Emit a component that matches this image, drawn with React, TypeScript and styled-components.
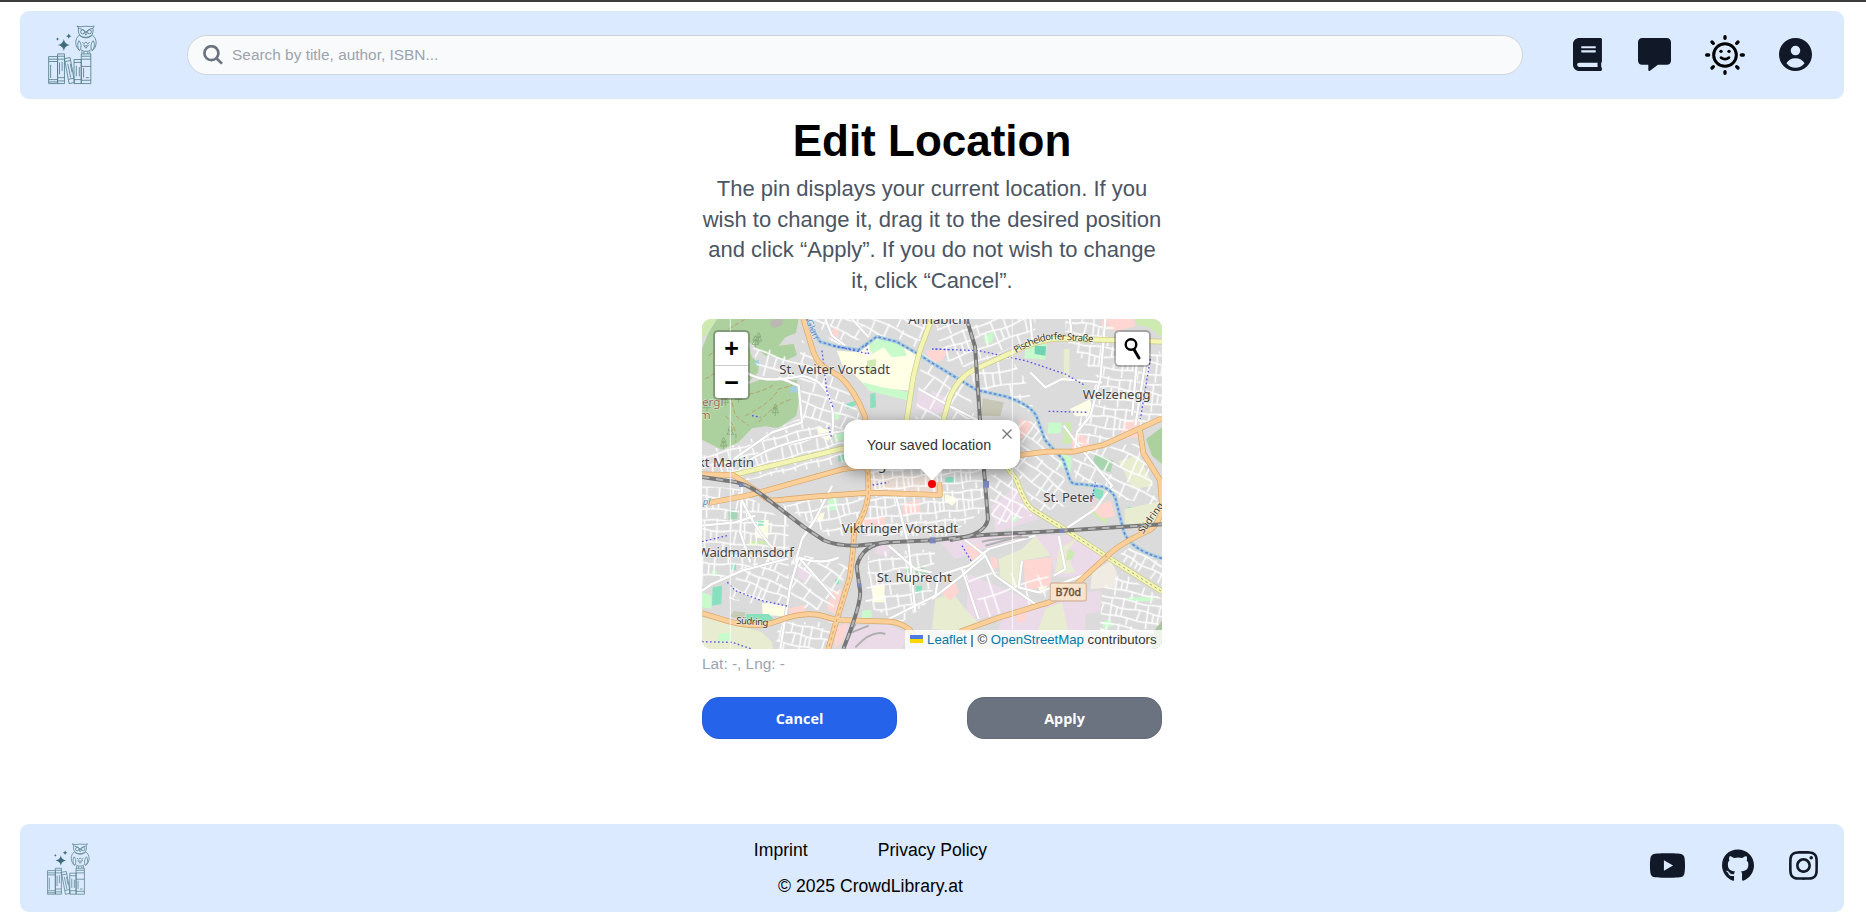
import React from "react";
import styled, { createGlobalStyle } from "styled-components";
import { FaBook, FaGithub, FaInstagram, FaYoutube } from "react-icons/fa";
import { FaMessage } from "react-icons/fa6";

const sans = `"Liberation Sans", Arial, sans-serif`;

const GlobalStyle = createGlobalStyle`
  *, *::before, *::after { box-sizing: border-box; }
  body { margin: 0; background: #fff; font-family: ${sans}; }
  h1, p { margin: 0; }
  a { color: inherit; text-decoration: none; }
  svg { display: block; }
`;

const Page = styled.div`
  display: flex;
  flex-direction: column;
  height: 919px;
  padding: 9px 22px 7px 20px;
  border-top: 2px solid #3b3b3b;
  overflow: hidden;
`;

const Header = styled.header`
  display: flex;
  align-items: center;
  flex: none;
  height: 88px;
  padding: 0 32px 0 28px;
  border-radius: 9px;
  background: #dbeafe;
`;

const LogoSvg = styled.svg<{ $height: number }>`
  flex: none;
  height: ${(p) => p.$height}px;
  width: ${(p) => p.$height * 0.825}px;
`;

const SearchField = styled.label`
  display: flex;
  align-items: center;
  flex: 1;
  height: 40px;
  margin: 0 50px 0 90px;
  padding-left: 15px;
  gap: 9px;
  border: 1px solid #d1d5db;
  border-radius: 20px;
  background: #f9fafb;
`;

const SearchInput = styled.input`
  flex: 1;
  padding: 0;
  border: 0;
  outline: 0;
  background: transparent;
  font: 15.4px ${sans};
  color: #111827;
  &::placeholder { color: #9ca3af; opacity: 1; }
`;

const IconNav = styled.nav<{ $gap: number }>`
  display: flex;
  align-items: center;
  gap: ${(p) => p.$gap}px;
  color: #111827;
`;

const HeaderNav = styled(IconNav)`
  padding-bottom: 1px;
`;

const IconLink = styled.a<{ $width: number; $height?: number }>`
  flex: none;
  width: ${(p) => p.$width}px;
  height: ${(p) => p.$height ?? 33}px;
  svg { width: 100%; height: 100%; }
`;

const Main = styled.main`
  flex: 1;
  width: 460px;
  margin-left: 682px;
`;

const Title = styled.h1`
  padding-top: 17px;
  font-size: 44px;
  line-height: 49px;
  text-align: center;
  white-space: nowrap;
  color: #000;
`;

const Intro = styled.p`
  margin: 9px -4px 0;
  padding: 0 4px;
  font-size: 22px;
  line-height: 30.6px;
  text-align: center;
  color: #4b5563;
`;

const MapFrame = styled.section`
  position: relative;
  height: 330px;
  margin-top: 23px;
  border-radius: 9px;
  overflow: hidden;
`;

const MapCanvas = styled.svg`
  width: 460px;
  height: 330px;
`;

const ControlBox = styled.div<{ $side: "left" | "right" }>`
  position: absolute;
  top: 11px;
  ${(p) => p.$side}: 11px;
  width: 37px;
  border: 2px solid rgba(0, 0, 0, 0.25);
  border-radius: 5px;
  background: #fff;
  background-clip: padding-box;
`;

const ControlButton = styled.button`
  display: grid;
  place-items: center;
  width: 33px;
  height: 33px;
  padding: 0;
  border: 0;
  background: transparent;
  font: bold 25px/33px ${sans};
  color: #000;
  & + & { border-top: 1px solid #ccc; }
`;

const Popup = styled.div`
  position: absolute;
  left: 142px;
  top: 101px;
  display: flex;
  align-items: center;
  justify-content: center;
  width: 176px;
  height: 49px;
  padding: 0 6px 0 0;
  border-radius: 13px;
  background: #fff;
  box-shadow: 0 3px 15px rgba(0, 0, 0, 0.4);
  font-size: 14.3px;
  color: #333;
  white-space: nowrap;
`;

const PopupTip = styled.svg`
  position: absolute;
  left: 76px;
  top: 48px;
`;

const PopupClose = styled.svg`
  position: absolute;
  right: 8px;
  top: 9px;
`;

const Pin = styled.i`
  position: absolute;
  left: 226px;
  top: 161px;
  width: 8px;
  height: 8px;
  border-radius: 50%;
  background: #f00000;
`;

const Attribution = styled.div`
  position: absolute;
  right: 0;
  bottom: 0;
  display: flex;
  align-items: center;
  height: 19px;
  padding: 0 5.5px 1px;
  background: rgba(255, 255, 255, 0.8);
  font-size: 13.2px;
  white-space: pre;
  color: #333;
  a { color: #0078a8; }
  svg { margin-right: 4px; }
`;

const Coordinates = styled.p`
  margin-top: 5px;
  font-size: 15.4px;
  line-height: 20px;
  color: #9ca3af;
`;

const Actions = styled.div`
  display: flex;
  justify-content: space-between;
  margin-top: 23px;
`;

const ActionButton = styled.button<{ $tone: string }>`
  width: 195px;
  height: 42px;
  padding: 0;
  border: 1px solid rgba(0, 0, 0, 0.08);
  border-radius: 17.6px;
  background: ${(p) => p.$tone};
  font: bold 14.4px "Open Sans", "Noto Sans", sans-serif;
  color: #fff;
`;

const Footer = styled.footer`
  display: grid;
  grid-template-columns: 1fr auto 1fr;
  align-items: center;
  flex: none;
  height: 88px;
  padding: 0 26px 0 27px;
  border-radius: 9px;
  background: #dbeafe;
`;

const FooterLogo = styled.div`
  padding-top: 2px;
`;

const FooterText = styled.div`
  display: flex;
  flex-direction: column;
  align-items: center;
  gap: 9px;
  margin-right: 124px;
  font-size: 17.6px;
  line-height: 27px;
  color: #000;
`;

const FooterLinks = styled.div`
  display: flex;
  gap: 70px;
`;

const FooterSocial = styled(IconNav)`
  justify-content: flex-end;
  padding-bottom: 5px;
  margin-left: -124px;
`;

function Logo({ height }: { height: number }) {
  return (
    <LogoSvg $height={height} viewBox="143 77 149 179" fill="none" stroke="#54808d" strokeWidth="2.6" strokeLinejoin="round">
      <path d="M145 172h27v82h-27zM145 180h27M145 187h27M145 242h27M145 249h27M151 197v40" />
      <path d="M172 164h21v90h-21zM172 171h21M172 180h21M172 236h21M172 246h21M178 190v36M186 188v28" />
      <path d="M193 178l17-3 14 76-17 3zM196 187l16-3M205 241l16-3M203 194l9 42M211 194l5 26" />
      <path d="M222 181h22v73h-22zM222 190h22M222 242h22M229 200v32M238 204v28" />
      <path d="M244 164h29v90h-29zM244 171h29M244 180h29M244 202h29M244 244h29M251 207v29M258 236h9" />
      <path d="M236 84c-4-1-5-4-5-5 8 5 16 1 27 1s19 3 25-1c0 2-1 5-4 6 2 10 1 19-6 24-9 6-23 6-31 0-7-6-8-15-6-25z" />
      <path d="M238 87c8 1 15 5 20 11 4-6 11-10 20-11M258 96l-3 5 3 6 4-6z" />
      <circle cx="248" cy="97" r="6" />
      <circle cx="269" cy="97" r="6" />
      <path d="M238 107c-14 10-15 34 1 47M278 107c14 10 16 35-1 47M238 107c12 11 29 11 40 0M237 124c-6 9-4 22 2 30 6-8 6-22-2-30zM280 124c7 9 4 22-3 30-6-8-4-22 3-30zM243 151c8 7 22 7 30 0M246 156v7M252 157v6M264 157v6M270 156v7" />
      <path d="M247 128l5 5 6-5 6 5 6-5M250 136l8 11 9-11M254 136l4 5 5-5" />
      <path d="M191 119q2 15 18 18-16 3-18 18-2-15-18-18 16-3 18-18zM206 102q1 7 8 8-7 1-8 8-1-7-8-8 7-1 8-8zM172 114q1 4 5 5-4 1-5 5-1-4-5-5 4-1 5-5z" fill="#3f6c7b" stroke="none" />
    </LogoSvg>
  );
}

function SunIcon() {
  return (
    <svg viewBox="0 0 120 120" fill="none" stroke="#000" strokeWidth="10" strokeLinecap="round">
      <circle cx="60" cy="60" r="34" strokeWidth="9" />
      <path d="M60 5v5M60 110v5M5 60h6M109 60h6M21 21l4 4M95 95l4 4M99 21l-4 4M25 95l-4 4" />
      <path d="M48 68q12 9 24 0" strokeWidth="8" />
      <circle cx="48" cy="49" r="5" fill="#000" stroke="none" />
      <circle cx="72" cy="49" r="5" fill="#000" stroke="none" />
    </svg>
  );
}

function AccountIcon() {
  return (
    <svg viewBox="2 2 20 20" fill="currentColor">
      <path d="M12 2C6.48 2 2 6.48 2 12s4.48 10 10 10 10-4.48 10-10S17.52 2 12 2zm0 4.7a2.9 2.9 0 1 1 0 5.8 2.9 2.9 0 0 1 0-5.8zM12 20c-2.03 0-4.1-.8-5.5-2.7 1-2 3.2-3.1 5.5-3.1s4.5 1.1 5.5 3.1C16.1 19.2 14.03 20 12 20z" />
    </svg>
  );
}

type Shape = [fill: string, points: string];

const forest = "#add19e";
const school = "#ffffe5";
const pitch = "#88e0be";
const park = "#c8facc";
const meadow = "#e8ecd0";
const industry = "#ebdbe8";
const retail = "#ffd6d1";
const grass = "#cdebb0";

const land: Shape[] = [
  [forest, "0,90 20,40 45,0 290,0 282,42 250,55 230,80 275,75 285,108 250,125 215,110 190,110 150,75 138,70 150,115 172,135 168,160 145,185 60,190 40,215 0,235"],
  [grass, "0,0 44,0 20,38 0,60"],
  [forest, "0,200 60,190 140,195 175,182 285,183 292,240 283,290 230,328 190,322 150,328 110,370 60,392 0,362"],
  ["#bab9af", "205,5 225,0 245,2 238,20 215,28 204,18"],
  ["#a3cfe0", "262,205 288,200 290,218 268,222"],
  ["#a3cfe0", "156,128 170,122 172,136 160,140"],
  [school, "404,95 470,100 530,55 590,72 654,112 635,215 560,210 490,200 450,160 430,160"],
  [park, "500,75 540,55 600,75 615,110 570,115 545,85 510,105"],
  [park, "482,190 540,205 625,220 620,245 500,215"],
  [grass, "495,125 522,120 520,162 496,162"],
  [pitch, "505,225 520,222 522,265 505,268"],
  [pitch, "432,255 460,245 462,258 436,270"],
  [retail, "385,40 400,25 410,32 408,60 388,58"],
  [retail, "670,95 740,92 720,125 690,130"],
  [industry, "650,215 720,240 715,285 640,270"],
  [industry, "690,215 745,240 725,280 690,275"],
  [park, "395,285 415,280 410,300 394,303"],
  [school, "345,325 395,335 380,365 350,352"],
  [pitch, "408,410 428,404 428,425 410,428"],
  [park, "395,335 428,330 428,362 398,368"],
  [park, "845,52 875,38 872,70 850,75"],
  [park, "970,65 1035,75 1030,122 968,118"],
  ["#70d3b3", "998,80 1032,82 1030,110 998,105"],
  [meadow, "1085,90 1103,90 1101,180 1086,178"],
  [retail, "1200,0 1295,0 1300,22 1250,35 1197,28"],
  [grass, "1300,0 1380,0 1380,55 1340,25 1305,18"],
  ["#c6c7b4", "842,238 905,250 895,292 838,290"],
  [school, "1104,270 1165,240 1172,290 1120,292"],
  [retail, "952,300 990,310 978,340 958,360 944,345"],
  [park, "1040,310 1080,312 1076,342 1036,344"],
  [grass, "1086,312 1110,310 1110,372 1082,375"],
  [retail, "1110,350 1145,345 1170,385 1110,400"],
  [retail, "1265,310 1312,298 1310,355 1255,360"],
  [forest, "1332,360 1380,325 1380,435 1350,410"],
  [meadow, "1250,425 1310,410 1355,500 1290,510"],
  ["#a8d5ad", "1180,405 1235,425 1225,460 1168,445"],
  [park, "1070,400 1110,415 1105,460 1072,440"],
  ["#eadcd4", "500,470 705,465 715,520 505,515"],
  [pitch, "730,475 760,475 760,490 730,492"],
  [school, "730,525 770,540 750,560 728,545"],
  [park, "378,542 407,535 405,572 376,575"],
  [school, "345,585 368,580 362,605 344,603"],
  [retail, "480,600 550,590 550,625 485,630"],
  [retail, "600,555 655,540 655,580 605,590"],
  ["#a8d5b9", "78,572 108,570 106,600 80,602"],
  [school, "160,605 200,603 198,660 158,655"],
  [pitch, "161,605 186,606 184,620 160,620"],
  [grass, "140,665 195,665 190,678 138,680"],
  [pitch, "90,735 103,733 102,752 88,754"],
  [park, "30,755 45,757 44,770 28,770"],
  [industry, "290,735 330,760 315,790 285,775"],
  [industry, "520,670 567,680 560,710 520,705"],
  [pitch, "32,805 60,800 58,855 30,860"],
  [park, "0,820 28,830 28,870 0,865"],
  [school, "180,852 250,860 245,892 182,887"],
  [pitch, "133,885 200,885 215,900 190,912 132,905"],
  ["#c4ccb5", "95,877 130,880 127,905 85,892"],
  [meadow, "0,895 95,915 180,940 210,970 212,990 0,990"],
  [park, "50,945 85,940 88,965 48,968"],
  [retail, "260,868 310,858 305,890 268,895"],
  [retail, "387,820 420,812 400,885 375,870"],
  [retail, "404,925 438,910 420,970 396,990"],
  [school, "512,800 548,797 547,850 512,850"],
  [park, "480,875 508,872 510,895 480,900"],
  ["#a8d5ad", "612,745 660,740 680,765 612,760"],
  [industry, "430,920 564,918 620,945 600,990 424,990"],
  [industry, "715,670 860,645 990,640 950,670 850,690 760,720"],
  [retail, "795,680 825,675 835,705 805,730"],
  [industry, "870,560 945,500 1010,600 880,640"],
  [park, "930,590 950,597 940,612 928,605"],
  [retail, "865,710 885,720 888,745 870,755"],
  [meadow, "890,720 960,690 1000,650 1060,660 1045,710 960,725 950,810 895,775"],
  [retail, "965,725 1050,715 1045,800 970,815"],
  [industry, "1000,650 1120,645 1215,720 1150,780 1055,770 1050,715"],
  [meadow, "1130,655 1090,700 1120,760 1060,765 1070,690"],
  [industry, "800,765 955,830 1000,855 850,895 790,920"],
  [meadow, "700,840 750,820 790,870 830,912 770,938 690,930"],
  [retail, "715,820 760,790 770,820 745,845"],
  [industry, "900,900 1010,865 1110,820 1150,825 1150,990 870,990"],
  [meadow, "1030,870 1080,850 1110,990 990,990"],
  [retail, "940,890 975,880 970,905 950,912"],
  ["#f0ebe3", "1170,760 1225,725 1245,760 1240,805 1165,810"],
  [school, "1010,803 1035,800 1033,820 1012,825"],
  [park, "1275,835 1355,835 1355,847 1280,847"],
  [park, "1200,910 1225,900 1235,920 1205,930"],
  [industry, "1150,820 1195,815 1195,880 1150,885"],
  ["#aac6a0", "1340,955 1380,905 1380,990 1350,990"],
  [grass, "1164,580 1200,550 1225,585 1210,615"],
  [retail, "1165,565 1225,545 1240,590 1200,600"],
  [pitch, "1175,505 1205,515 1200,545 1170,530"],
  [pitch, "1276,565 1300,565 1300,588 1278,588"],
  [meadow, "1268,570 1380,545 1380,612 1270,625"],
  [grass, "1100,690 1118,700 1110,720 1090,725"],
  [pitch, "640,800 660,800 660,823 642,823"],
  [pitch, "400,780 412,777 410,795 398,797"],
];

type Patch = { points: string; angle: number; w: number; h: number };

const streets: Patch[] = [
  { points: "150,70 290,130 300,60 360,150 430,200 480,300 440,350 300,300 290,190 170,170", angle: 18, w: 52, h: 32 },
  { points: "110,375 290,300 425,345 430,430 100,490 0,455 0,395", angle: -15, w: 36, h: 30 },
  { points: "330,0 690,0 650,90 590,60 520,50 400,80", angle: 25, w: 46, h: 34 },
  { points: "660,100 800,200 820,300 640,300", angle: 32, w: 54, h: 40 },
  { points: "700,0 1000,0 1000,60 920,90 800,150 720,120", angle: -20, w: 42, h: 30 },
  { points: "800,160 920,110 970,180 1000,290 910,230 820,205", angle: -8, w: 50, h: 36 },
  { points: "1090,0 1200,0 1310,80 1380,100 1380,290 1200,370 1110,380 1150,250 1190,180 1090,60", angle: 8, w: 34, h: 27 },
  { points: "500,450 850,450 850,570 740,650 480,650", angle: -5, w: 29, h: 25 },
  { points: "230,550 490,530 450,650 380,650", angle: -12, w: 38, h: 30 },
  { points: "0,500 110,510 260,615 260,710 0,800", angle: 4, w: 40, h: 30 },
  { points: "110,750 260,700 260,850 180,860 80,840", angle: 22, w: 34, h: 28 },
  { points: "270,700 440,740 390,880 260,860", angle: 35, w: 48, h: 36 },
  { points: "500,700 700,690 690,840 600,910 490,860", angle: -8, w: 38, h: 34 },
  { points: "230,910 400,910 370,990 220,990", angle: 12, w: 30, h: 28 },
  { points: "920,300 1010,310 1080,430 1100,560 1010,580 930,450", angle: 38, w: 44, h: 30 },
  { points: "1110,400 1320,370 1370,560 1260,540 1120,480", angle: 26, w: 48, h: 36 },
  { points: "1240,715 1290,680 1380,730 1380,800", angle: 28, w: 32, h: 25 },
  { points: "1200,810 1260,760 1380,840 1380,900 1330,990 1190,990", angle: 12, w: 37, h: 24 },
  { points: "860,470 920,460 990,590 870,620", angle: 30, w: 38, h: 30 },
  { points: "770,750 1040,770 1030,840 860,895", angle: -18, w: 70, h: 60 },
];

/* One tile of side streets: three bent lanes joined by uneven cross streets. */
function laneTile({ w, h }: Patch) {
  const W = w * 3;
  const wave = (y: number, bend: number) => `M0 ${y}Q${W / 4} ${y + bend} ${W / 2} ${y}T${W} ${y}`;
  return [
    wave(6, 5),
    wave(6 + h, -6),
    wave(6 + h * 2.2, 4),
    `M${W * 0.08} 0V${6 + h}`,
    `M${W * 0.42} 6L${W * 0.46} ${h * 3.3}`,
    `M${W * 0.74} 0V${6 + h * 2.2}`,
    `M${W * 0.22} ${6 + h}L${W * 0.18} ${6 + h * 2.2}`,
    `M${W * 0.92} ${6 + h * 2.2}V${h * 3.3}`,
    `M${W * 0.6} ${6 + h}V${6 + h * 2.2}`,
  ].join("");
}

const whiteRoads = [
  "M120 150q50 50 180 20q110 20 90 180",
  "M95 420L210 340L300 310L290 200L230 175",
  "M110 455Q160 380 430 335",
  "M0 815L30 795L120 755L260 718",
  "M290 715L265 800L235 990",
  "M300 660L340 600L370 540L390 500",
  "M290 715Q360 740 410 715M290 715L400 840",
  "M280 730L300 660",
  "M120 490L115 640L145 730",
  "M215 690Q150 620 110 520",
  "M560 900L700 830L710 770L800 740L860 690L1000 650",
  "M690 840L780 770L850 710L760 640",
  "M580 525L620 680L640 880",
  "M850 710L880 770L1000 855",
  "M1210 0L1195 180L1165 290L1125 340L1118 400",
  "M1104 0L1110 60M1310 70L1290 290",
  "M985 0L990 60L1030 58M985 160L1030 205L1080 180L1200 190",
  "M1085 320L1130 380L1230 500L1180 570L1090 630",
  "M780 750L830 900M1330 130L1300 320",
  "M650 210L760 270L840 310",
  "M370 0L390 50L430 80M450 0L500 55",
  "M1070 650L1090 750L1055 770M960 725L950 805L1010 820L1140 770",
  "M560 680L640 750L690 760",
  "M0 620L100 610L160 590M250 620L250 560",
];

const river = "M314 0L354 68L404 83L469 93L524 53L584 68L654 108L684 128L824 213L914 233Q990 260 1004 293L1029 363L1084 423L1104 483Q1110 497 1130 495L1204 503Q1240 520 1244 553L1264 633Q1280 690 1380 718";

const yellowRoads = [
  "M94 468L424 388L620 350",
  "M689 0L654 93L634 173L614 303",
  "M1380 68L1064 58Q1000 65 924 103L814 153Q770 175 744 233L724 303",
  "M900 425L944 483Q970 560 994 573L1084 628L1214 713L1380 818",
];

const orangeRoads = [
  "M304 0L329 83Q340 125 364 143L414 173Q460 215 489 293L497 460L499 510Q500 570 456 635L454 683L444 773L404 903L379 990",
  "M14 553L144 528L424 450L700 420L954 408L1034 398L1114 398L1204 378L1380 298",
  "M0 466L94 468L174 523Q194 545 214 545L334 533L504 521L714 528L712 490",
  "M0 883L84 908Q170 930 230 905Q310 875 364 891L404 903L564 908Q600 912 624 933L650 975",
  "M774 938L884 898L1014 858Q1060 848 1104 813L1214 713Q1250 675 1344 633Q1376 610 1380 560L1374 483L1324 403L1314 333",
];

const rails = [
  "M0 474L74 485Q130 490 174 523L304 623L364 663Q400 680 464 680L564 670L690 664L844 648L1079 635L1380 616",
  "M794 0L819 83L834 303L849 490L858 600Q850 650 744 663",
  "M560 669Q480 675 464 743L474 813Q480 850 424 990",
];

const dashedPaths = [
  "M690 90L830 95L970 125L1090 165L1150 200",
  "M1040 277L1160 280M1345 120L1315 300",
  "M360 95L375 220L395 270M395 80L500 105L490 75",
  "M410 450L350 465M500 500L560 490",
  "M0 668L75 650M76 790L100 815L180 845L260 862",
  "M1170 540L1180 490M780 680L810 730",
  "M150 290L175 295M380 325L390 360",
  "M0 968L90 970L150 990M700 90L740 92",
];

const trails = [
  "M20 110L60 80L120 100M60 45L110 60M100 150L60 190M120 230Q180 220 220 195M130 290Q210 250 230 210L270 200M70 290Q110 330 100 370M170 310Q210 260 270 240",
  "M80 210L100 290L140 320M80 30L130 0M10 180L60 150",
];

const trees = [[70, 225], [110, 215], [160, 50], [15, 240], [220, 255], [65, 355], [85, 320], [170, 40]];

function StreetMap() {
  return (
    <MapCanvas viewBox="0 0 1380 990" fill="none">
      <defs>
        {streets.map((s, i) => (
          <pattern key={i} id={`streets${i}`} width={s.w * 3} height={s.h * 3.3} patternUnits="userSpaceOnUse" patternTransform={`rotate(${s.angle})`}>
            <path d={laneTile(s)} stroke="#fff" strokeWidth="4.5" />
          </pattern>
        ))}
        <path id="pischeldorfer" d="M942 103Q1010 62 1064 61L1180 70" />
      </defs>
      <rect width="1380" height="990" fill="#dcdbdb" />
      {land.map(([fill, points], i) => (
        <polygon key={i} points={points} fill={fill} />
      ))}
      {streets.map((s, i) => (
        <polygon key={i} points={s.points} fill={`url(#streets${i})`} />
      ))}
      <g stroke="#b98f5a" strokeWidth="3" strokeDasharray="14 7" opacity=".75">
        {trails.map((d) => <path key={d} d={d} />)}
      </g>
      <g stroke="#85aa78" strokeWidth="2.5">
        {trees.map(([x, y]) => <path key={`${x}-${y}`} d={`M${x} ${y}l-7 14h14zM${x} ${y + 10}l-10 16h20zM${x} ${y + 14}v22`} />)}
      </g>
      <g stroke="#c9c9c9" strokeWidth="9" strokeLinejoin="round">
        {whiteRoads.map((d) => <path key={d} d={d} />)}
      </g>
      <g stroke="#fff" strokeWidth="7" strokeLinejoin="round">
        {whiteRoads.map((d) => <path key={d} d={d} />)}
      </g>
      <path d={river} stroke="#a5cfdc" strokeWidth="11" />
      <path d={river} stroke="#6a82dd" strokeWidth="5" strokeDasharray="8 7" />
      <g stroke="#5656ee" strokeWidth="4" strokeDasharray="5 7">
        {dashedPaths.map((d) => <path key={d} d={d} />)}
      </g>
      <g strokeLinejoin="round">
        {yellowRoads.map((d) => <path key={d} d={d} stroke="#c9cb86" strokeWidth="17" />)}
        {yellowRoads.map((d) => <path key={d} d={d} stroke="#f3f5b4" strokeWidth="13" />)}
        {orangeRoads.map((d) => <path key={d} d={d} stroke="#d9a666" strokeWidth="17" />)}
        {orangeRoads.map((d) => <path key={d} d={d} stroke="#fbcf99" strokeWidth="13" />)}
      </g>
      <path d={yellowRoads[3]} stroke="#a9a97a" strokeWidth="3" strokeDasharray="7 9" />
      <path d="M497 460L499 510Q500 570 456 635L454 683L444 773L404 903L379 990" stroke="#d3a36c" strokeWidth="3" strokeDasharray="9 10" />
      <path d="M440 955L460 915M450 940L500 920M460 985Q510 930 550 945M840 668Q900 655 980 655M850 680L960 650" stroke="#b0b0b0" strokeWidth="6" />
      {rails.map((d) => <path key={d} d={d} stroke="#777" strokeWidth="12" />)}
      {rails.map((d) => <path key={d} d={d} stroke="#b5b5b5" strokeWidth="6" strokeDasharray="22 20" />)}
      <g fill="#7b86bd">
        <rect x="683" y="655" width="18" height="18" />
        <rect x="843" y="486" width="18" height="20" />
        <rect x="1073" y="629" width="14" height="13" />
        <rect x="466" y="793" width="12" height="12" />
        <rect x="111" y="493" width="13" height="11" />
      </g>
      <path d="M85 0V990M931 0V990" stroke="#fff" strokeWidth="3" opacity=".8" />
      <g fontFamily='"Noto Sans", sans-serif' fontSize="39.5" fill="#424242" stroke="#fff" strokeOpacity=".5" strokeWidth="4" paintOrder="stroke" strokeLinejoin="round">
        <text x="232" y="165" textLength="332">St. Veiter Vorstadt</text>
        <text x="619" y="14" textLength="184">Annabichl</text>
        <text x="1142" y="241" textLength="204">Welzenegg</text>
        <text x="156" y="443" textAnchor="end">kt Martin</text>
        <text x="275" y="713" textLength="288" textAnchor="end">Waidmannsdorf</text>
        <text x="419" y="641" textLength="349">Viktringer Vorstadt</text>
        <text x="524" y="788" textLength="225">St. Ruprecht</text>
        <text x="1024" y="550" textLength="154">St. Peter</text>
        <text x="527" y="449" fontSize="42">g</text>
        <g fontSize="29" fill="#3f3828">
          <text><textPath href="#pischeldorfer" textLength="240">Pischeldorfer Straße</textPath></text>
          <text x="102" y="914" textLength="97" transform="rotate(4 102 914)">Südring</text>
          <text x="1323" y="646" transform="rotate(-54 1323 646)">Südring</text>
        </g>
        <g fontSize="35" fill="#9b6a5a">
          <text x="0" y="262">ergl</text>
          <text x="-7" y="300">m</text>
        </g>
        <g fontSize="28" fill="#5c8cc0">
          <text x="2" y="557" fontStyle="italic">pl</text>
          <text x="312" y="6" transform="rotate(68 312 6)">Glan</text>
        </g>
      </g>
      <rect x="1045" y="792" width="108" height="54" rx="6" fill="#f8e3cd" stroke="#d6bba0" strokeWidth="4" />
      <text x="1099" y="830" fontFamily='"Noto Sans", sans-serif' fontSize="32" fontWeight="500" fill="#6d5039" stroke="#6d5039" strokeWidth=".8" textAnchor="middle">B70d</text>
    </MapCanvas>
  );
}

export default function App() {
  return (
    <>
      <GlobalStyle />
      <Page>
        <Header>
          <Logo height={59.5} />
          <SearchField>
            <svg width="20" height="20" viewBox="0 0 20 20" fill="none" stroke="#6b7280" strokeWidth="2.7">
              <circle cx="8.4" cy="8.2" r="7" />
              <path d="M13.4 13.2L19 18.6" />
            </svg>
            <SearchInput placeholder="Search by title, author, ISBN..." />
          </SearchField>
          <HeaderNav $gap={34}>
            <IconLink $width={31}><FaBook preserveAspectRatio="xMinYMid slice" viewBox="0 0 480 512" /></IconLink>
            <IconLink $width={33}><FaMessage /></IconLink>
            <IconLink $width={40} $height={40}><SunIcon /></IconLink>
            <IconLink $width={33}><AccountIcon /></IconLink>
          </HeaderNav>
        </Header>
        <Main>
          <Title>Edit Location</Title>
          <Intro>
            The pin displays your current location. If you wish to change it, drag it to the desired position and click “Apply”. If you do not wish to change it, click “Cancel”.
          </Intro>
          <MapFrame>
            <StreetMap />
            <ControlBox $side="left">
              <ControlButton>+</ControlButton>
              <ControlButton>−</ControlButton>
            </ControlBox>
            <ControlBox $side="right">
              <ControlButton>
                <svg width="33" height="33" fill="none" stroke="#000" strokeWidth="2.4" strokeLinecap="round">
                  <circle cx="15" cy="12.5" r="5.3" />
                  <path d="M18 17.5L23 26" strokeWidth="3" />
                </svg>
              </ControlButton>
            </ControlBox>
            <Popup>
              Your saved location
              <PopupClose width="10" height="10" stroke="#757575" strokeWidth="1.3"><path d="M.5 .5L9.5 9.5M9.5 .5L.5 9.5" /></PopupClose>
              <PopupTip width="24" height="13"><path d="M0 0H24L12 12.5z" fill="#fff" /></PopupTip>
            </Popup>
            <Pin />
            <Attribution>
              <svg width="13" height="8"><path d="M0 0h13v4H0z" fill="#4c7be1" /><path d="M0 4h13v4H0z" fill="#ffd500" /></svg>
              <a>Leaflet</a> | © <a>OpenStreetMap</a> contributors
            </Attribution>
          </MapFrame>
          <Coordinates>Lat: -, Lng: -</Coordinates>
          <Actions>
            <ActionButton $tone="#2563eb">Cancel</ActionButton>
            <ActionButton $tone="#6b7280">Apply</ActionButton>
          </Actions>
        </Main>
        <Footer>
          <FooterLogo><Logo height={52} /></FooterLogo>
          <FooterText>
            <FooterLinks><a>Imprint</a><a>Privacy Policy</a></FooterLinks>
            <span>© 2025 CrowdLibrary.at</span>
          </FooterText>
          <FooterSocial $gap={35.5}>
            <IconLink $width={37}><FaYoutube /></IconLink>
            <IconLink $width={32}><FaGithub /></IconLink>
            <IconLink $width={29}><FaInstagram /></IconLink>
          </FooterSocial>
        </Footer>
      </Page>
    </>
  );
}
